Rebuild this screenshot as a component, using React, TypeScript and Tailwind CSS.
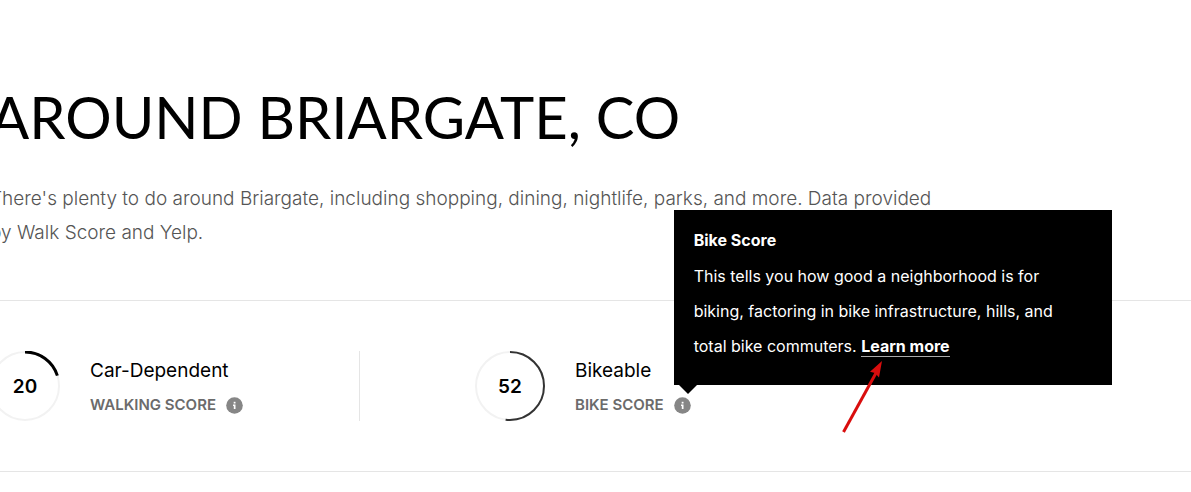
import React, { useId } from 'react';

interface ScoreCardProps {
  score: number;
  rating: string;
  label: string;
  ringColor: string;
  ringWidth: number;
  children?: React.ReactNode;
}

const RADIUS = 34;
const CIRCUMFERENCE = 2 * Math.PI * RADIUS;

function InfoIcon() {
  return (
    <svg className="block size-[17px]" viewBox="0 0 17 17" aria-hidden="true">
      <circle cx="8.5" cy="8.5" r="8.3" fill="#868686" />
      <rect x="7.7" y="4.8" width="1.8" height="1.7" fill="#fff" />
      <path d="M7 7.6h2.5V12H7.8V9H7z" fill="#fff" />
    </svg>
  );
}

// Ring that fills clockwise from twelve o'clock
function ScoreRing({ score, color, width }: { score: number; color: string; width: number }) {
  return (
    <div className="grid size-[70px] shrink-0 place-items-center">
      <svg className="col-start-1 row-start-1 size-full" viewBox="0 0 70 70" aria-hidden="true">
        <circle cx="35" cy="35" r={RADIUS} fill="none" stroke="#f2f2f2" strokeWidth="2" />
        <circle
          cx="35"
          cy="35"
          r={RADIUS}
          fill="none"
          stroke={color}
          strokeWidth={width}
          strokeDasharray={`${(CIRCUMFERENCE * score) / 100} ${CIRCUMFERENCE}`}
          transform="rotate(-90 35 35)"
        />
      </svg>
      <span className="col-start-1 row-start-1 text-[19px] leading-none font-semibold text-black">{score}</span>
    </div>
  );
}

function ScoreCard({ score, rating, label, ringColor, ringWidth, children }: ScoreCardProps) {
  const tooltipId = useId();

  return (
    <div className="flex items-start gap-[30px]">
      <ScoreRing score={score} color={ringColor} width={ringWidth} />
      <div>
        <p className="text-[19px] leading-10 text-black">{rating}</p>
        <div className="flex items-center gap-2.5">
          <span className="text-[15px] leading-7 font-semibold text-[#6b6b6b]">{label}</span>
          <div className="relative">
            <button
              type="button"
              className="block"
              aria-label={`About ${label}`}
              aria-describedby={children ? tooltipId : undefined}
            >
              <InfoIcon />
            </button>
            {children && (
              <div id={tooltipId} role="tooltip" className="absolute bottom-full left-0 mb-3 w-[438px]">
                {children}
              </div>
            )}
          </div>
        </div>
      </div>
    </div>
  );
}

function BikeTooltip() {
  return (
    <div className="bg-black px-5 pt-3 pb-[21px] text-[16px] text-white">
      <h3 className="mb-px leading-9 font-bold">Bike Score</h3>
      <p className="leading-[35px]">
        This tells you how good a neighborhood is for
        <br />
        biking, factoring in bike infrastructure, hills, and
        <br />
        total bike commuters.{' '}
        <a href="#learn-more" className="border-b border-[#aaa] font-bold">
          Learn more
        </a>
      </p>
      <svg className="absolute top-full left-[5px] h-[9px] w-[18px]" viewBox="0 0 18 9" aria-hidden="true">
        <path d="M0 0h18L9 9z" fill="#000" />
      </svg>
      <svg className="absolute top-[149px] left-[165px] h-[76px] w-[48px]" viewBox="0 0 48 76" aria-hidden="true">
        <path d="M4.5 73L37 14" stroke="#d90d0d" strokeWidth="3" />
        <path d="M43 2L31 12.7L36 14L40 18.5z" fill="#d90d0d" />
      </svg>
    </div>
  );
}

export default function App() {
  return (
    <main className="min-h-screen overflow-hidden bg-white font-['Inter','Liberation_Sans',sans-serif]">
      <section className="-ml-2.5 pt-[84px]">
        <h2 className="font-['Lato',sans-serif] text-[58px] leading-[66px] whitespace-nowrap text-black">
          AROUND BRIARGATE, CO
        </h2>
        <p className="mt-8 text-[19px] leading-[34px] font-light whitespace-nowrap text-[#555]">
          There's plenty to do around Briargate, including shopping, dining, nightlife, parks, and more. Data provided
          <br />
          by Walk Score and Yelp.
        </p>
        <div className="mt-[50px] grid grid-cols-[370px_1fr] gap-x-[115px] border-y border-[#e5e5e5] py-[50px]">
          <div className="border-r border-[#e5e5e5]">
            <ScoreCard score={20} rating="Car-Dependent" label="WALKING SCORE" ringColor="#000" ringWidth={3} />
          </div>
          <ScoreCard score={52} rating="Bikeable" label="BIKE SCORE" ringColor="#333" ringWidth={2}>
            <BikeTooltip />
          </ScoreCard>
        </div>
      </section>
    </main>
  );
}
